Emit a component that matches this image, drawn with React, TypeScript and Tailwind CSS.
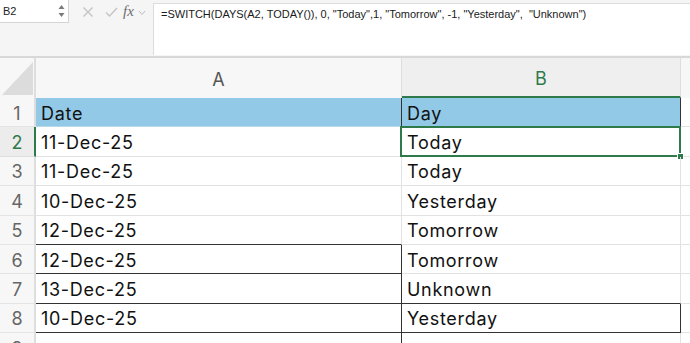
import React from "react";

const GREEN = "#2f7a4b";

type Row = { n: number; a: string; b: string; aCls: string; bCls: string };

const cellFont = { fontFamily: "Inter, 'Liberation Sans', sans-serif" };

const rows: Row[] = [
  { n: 1, a: "Date", b: "Day", aCls: "bg-[#92c9e7] border-b border-r border-b-[#b9d9ea] border-r-[#333]", bCls: "bg-[#92c9e7] border-b border-r border-b-[#b9d9ea] border-r-[#333]" },
  { n: 2, a: "11-Dec-25", b: "Today", aCls: "border-b border-r border-[#e2e2e2]", bCls: "border-b border-r border-[#e2e2e2]" },
  { n: 3, a: "11-Dec-25", b: "Today", aCls: "border-b border-r border-[#e2e2e2]", bCls: "border-b border-r border-[#e2e2e2]" },
  { n: 4, a: "10-Dec-25", b: "Yesterday", aCls: "border-b border-r border-[#e2e2e2]", bCls: "border-b border-r border-[#e2e2e2]" },
  { n: 5, a: "12-Dec-25", b: "Tomorrow", aCls: "border-b border-r border-r-[#e2e2e2] border-b-[#333]", bCls: "border-b border-r border-[#e2e2e2]" },
  { n: 6, a: "12-Dec-25", b: "Tomorrow", aCls: "border-b border-r border-[#333]", bCls: "border-b border-r border-[#e2e2e2]" },
  { n: 7, a: "13-Dec-25", b: "Unknown", aCls: "border-b border-r border-[#333]", bCls: "border-b border-r border-r-[#e2e2e2] border-b-[#333]" },
  { n: 8, a: "10-Dec-25", b: "Yesterday", aCls: "border-b border-r border-[#333]", bCls: "border-b border-r border-[#333]" },
  { n: 9, a: "", b: "", aCls: "border-b border-r border-b-[#e2e2e2] border-r-[#333]", bCls: "border-b border-r border-[#e2e2e2]" },
];

function Toolbar() {
  return (
    <div className="flex h-[56px] bg-[#f5f5f5]" style={{ fontFamily: "'Liberation Sans', Arial, sans-serif" }}>
      <div className="flex flex-col w-[153px] shrink-0">
        <div className="flex items-center h-[23px]">
          <div className="relative flex items-center w-[69px] h-[23px] bg-white border-b border-r border-[#d4d4d4] pl-[3px] text-[11px] text-[#222]">
            B2
            <svg className="absolute right-[3px] top-[4px]" width="7" height="14" viewBox="0 0 7 14">
              <path d="M3.5 1 L6.5 5 L0.5 5 Z" fill="#7a7a7a" />
              <path d="M3.5 13 L6.5 9 L0.5 9 Z" fill="#7a7a7a" />
            </svg>
          </div>
          <svg className="ml-[13px]" width="12" height="12" viewBox="0 0 12 12">
            <path d="M1.5 1.5 L10.5 10.5 M10.5 1.5 L1.5 10.5" stroke="#c4c4c4" strokeWidth="1.4" />
          </svg>
          <svg className="ml-[11px]" width="13" height="12" viewBox="0 0 13 12">
            <path d="M1 6.5 L4.5 10 L12 2" stroke="#c4c4c4" strokeWidth="1.4" fill="none" />
          </svg>
          <span className="ml-[5px] text-[15px] italic text-[#6e6e6e]" style={{ fontFamily: "'Liberation Serif', 'DejaVu Serif', serif" }}>
            fx
          </span>
          <svg className="ml-[4px] mt-[2px]" width="8" height="6" viewBox="0 0 8 6">
            <path d="M1 1 L4 4.5 L7 1" stroke="#bdbdbd" strokeWidth="1" fill="none" />
          </svg>
        </div>
      </div>
      <div className="flex-1 mt-[3px] mb-[1px] bg-white border-l border-t border-[#dcdcdc] pl-[7px] pt-[3px] text-[11px] text-[#1a1a1a] whitespace-pre leading-[14px]">
        {'=SWITCH(DAYS(A2, TODAY()), 0, "Today",1, "Tomorrow", -1, "Yesterday",  "Unknown")'}
      </div>
    </div>
  );
}

export default function App() {
  return (
    <div className="w-[690px] h-[343px] overflow-hidden bg-white">
      <Toolbar />
      <div className="h-[2px] bg-[#d8d8d8]" />
      <div className="flex h-[40px] bg-[#f7f7f7]" style={cellFont}>
        <div className="relative w-[36px] shrink-0 border-r-2 border-[#dedede]">
          <svg className="absolute left-[2px] bottom-[3px]" width="31" height="33" viewBox="0 0 31 33">
            <path d="M31 0 L31 33 L0 33 Z" fill="#dcdcdc" />
          </svg>
        </div>
        <div className="flex items-center justify-center w-[366px] shrink-0 border-r border-[#dedede] pt-[2px] text-[18px] text-[#555]">A</div>
        <div className="flex items-center justify-center w-[279px] shrink-0 border-r border-[#dedede] bg-[#efefef] border-b-2 border-b-[#2f7a4b] pt-[2px] text-[18px]" style={{ color: GREEN }}>
          B
        </div>
        <div className="flex-1" />
      </div>
      {rows.map((r) => (
        <div key={r.n} className="flex h-[29.375px]" style={cellFont}>
          <div
            className={
              r.n === 2
                ? "flex items-center justify-center w-[36px] shrink-0 bg-[#ececec] border-b border-b-[#dedede] border-r-2 border-r-[#2f7a4b] pt-[2px] text-[18px] text-[#2f7a4b]"
                : "flex items-center justify-center w-[36px] shrink-0 bg-[#f7f7f7] border-b border-b-[#e4e4e4] border-r-2 border-r-[#dedede] pt-[2px] text-[18px] text-[#666]"
            }
          >
            {r.n}
          </div>
          <div className={"flex items-center w-[366px] shrink-0 pl-[5px] pt-[2px] text-[18px] tracking-[0.7px] text-[#111] " + r.aCls}>{r.a}</div>
          <div className={"relative flex items-center w-[279px] shrink-0 pl-[5px] pt-[2px] text-[18px] tracking-[0.7px] text-[#111] " + r.bCls}>
            {r.b}
            {r.n === 2 && (
              <>
                <div className="absolute -top-[1px] -left-[2px] -right-[1px] -bottom-[1px] border-2 border-[#2f7a4b]" />
                <div className="absolute -right-[4px] -bottom-[4px] w-[7px] h-[7px] bg-[#2f7a4b] border border-white" />
              </>
            )}
          </div>
          <div className="flex-1 border-b border-[#e2e2e2]" />
        </div>
      ))}
    </div>
  );
}
